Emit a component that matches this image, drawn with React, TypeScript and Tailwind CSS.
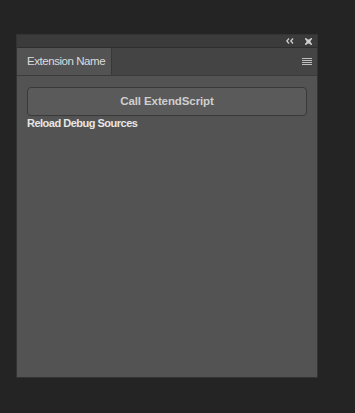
export default function App() {
  return (
    <div className="w-[355px] h-[413px] bg-[#242424] pt-[34px] pl-[16px] font-['Liberation_Sans',Arial,sans-serif]">
      <div className="w-[302px] h-[344px] bg-[#535353] border border-[#333333] flex flex-col">
        {/* title bar */}
        <div className="h-[12px] bg-[#3b3b3b] flex items-center justify-end gap-[11px] pr-[5px] border-b border-[#2e2e2e] box-content">
          <svg width="8" height="6" viewBox="0 0 8 6" className="text-[#cfcfcf]">
            <path d="M3 0.5 L0.8 3 L3 5.5 M7 0.5 L4.8 3 L7 5.5" stroke="currentColor" strokeWidth="1.3" fill="none" />
          </svg>
          <svg width="7" height="7" viewBox="0 0 7 7" className="text-[#cfcfcf]">
            <rect x="1.5" y="1.5" width="4" height="4" fill="currentColor" />
            <path d="M0.3 0.3 L6.7 6.7 M6.7 0.3 L0.3 6.7" stroke="currentColor" strokeWidth="1.6" />
          </svg>
        </div>
        {/* tab row */}
        <div className="h-[27px] bg-[#444444] flex items-stretch border-b border-[#3a3a3a] box-content">
          <div className="w-[95px] bg-[#535353] border-r border-[#383838] flex items-center pl-[10px] text-[11.5px] tracking-[-0.45px] text-[#dcdcdc] whitespace-nowrap">
            Extension Name
          </div>
          <div className="flex-1 flex items-center justify-end pr-[5px]">
            <div className="flex flex-col gap-[1px]">
              <div className="w-[10px] h-[1px] bg-[#bdbdbd]" />
              <div className="w-[10px] h-[1px] bg-[#bdbdbd]" />
              <div className="w-[10px] h-[1px] bg-[#bdbdbd]" />
              <div className="w-[10px] h-[1px] bg-[#bdbdbd]" />
            </div>
          </div>
        </div>
        {/* body */}
        <div className="px-[10px] pt-[11px]">
          <button className="w-full h-[29px] rounded-[4px] border border-[#393939] bg-[#5a5a5a] text-[11.5px] tracking-[-0.1px] font-bold text-[#cfcfcf] whitespace-nowrap">
            Call ExtendScript
          </button>
          <div className="text-[11px] tracking-[-0.5px] font-bold text-[#e6e6e6] leading-[14px] whitespace-nowrap">Reload Debug Sources</div>
        </div>
      </div>
    </div>
  );
}
